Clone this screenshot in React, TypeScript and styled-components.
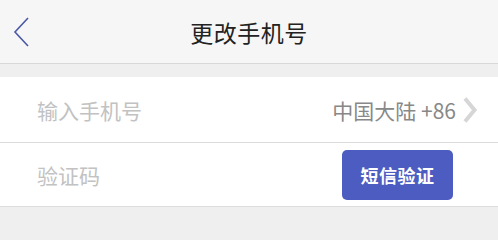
import styled, { createGlobalStyle } from 'styled-components';

const GlobalStyle = createGlobalStyle`
  html, body {
    margin: 0;
    padding: 0;
    background: #efefef;
    font-family: "Noto Sans CJK SC", "Noto Sans", sans-serif;
  }
`;

const Page = styled.div`
  width: 498px;
  min-height: 217px;
  background: #efefef;
`;

const Header = styled.div`
  height: 63px;
  display: flex;
  align-items: center;
  justify-content: center;
  position: relative;
  background: #f6f6f6;
  border-bottom: 1px solid #d8d8d8;
`;

const BackButton = styled.button`
  position: absolute;
  left: 12px;
  top: 15px;
  width: 20px;
  height: 34px;
  padding: 0;
  border: none;
  background: none;
  display: flex;
  align-items: center;
`;

const Title = styled.h1`
  margin: 0;
  font-size: 23px;
  font-weight: 400;
  color: #222;
  letter-spacing: 0.5px;
`;

const Form = styled.div`
  margin-top: 13px;
  background: #fff;
`;

const Row = styled.div<{ $height: number; $right: number }>`
  height: ${p => p.$height}px;
  display: flex;
  align-items: center;
  padding: 0 ${p => p.$right}px 0 37px;
  border-bottom: 1px solid #dcdcdc;
`;

const Input = styled.input`
  flex: 1;
  min-width: 0;
  border: none;
  outline: none;
  background: transparent;
  font-family: inherit;
  font-size: 21px;
  color: #333;
  padding: 0;
  &::placeholder {
    color: #c2c2c2;
  }
`;

const Country = styled.div`
  display: flex;
  align-items: center;
  gap: 6px;
  font-size: 21px;
  color: #888;
`;

const SmsButton = styled.button`
  width: 111px;
  height: 50px;
  border: none;
  border-radius: 5px;
  background: #4d5cc1;
  color: #fff;
  font-family: inherit;
  font-size: 18px;
  font-weight: 700;
  letter-spacing: 0.5px;
`;

export default function App() {
  return (
    <Page>
      <GlobalStyle />
      <Header>
        <BackButton>
          <svg width="20" height="32" viewBox="0 0 20 32">
            <path d="M16 2 L3 16 L16 30" fill="none" stroke="#4a58a6" strokeWidth="1.6" />
          </svg>
        </BackButton>
        <Title>更改手机号</Title>
      </Header>
      <Form>
        <Row $height={65} $right={20}>
          <Input placeholder="输入手机号" />
          <Country>
            中国大陆 +86
            <svg width="16" height="26" viewBox="0 0 16 26">
              <path d="M3 1.5 L12.5 13 L3 24.5" fill="none" stroke="#d6d6d6" strokeWidth="4" />
            </svg>
          </Country>
        </Row>
        <Row $height={63} $right={45}>
          <Input placeholder="验证码" />
          <SmsButton>短信验证</SmsButton>
        </Row>
      </Form>
    </Page>
  );
}
